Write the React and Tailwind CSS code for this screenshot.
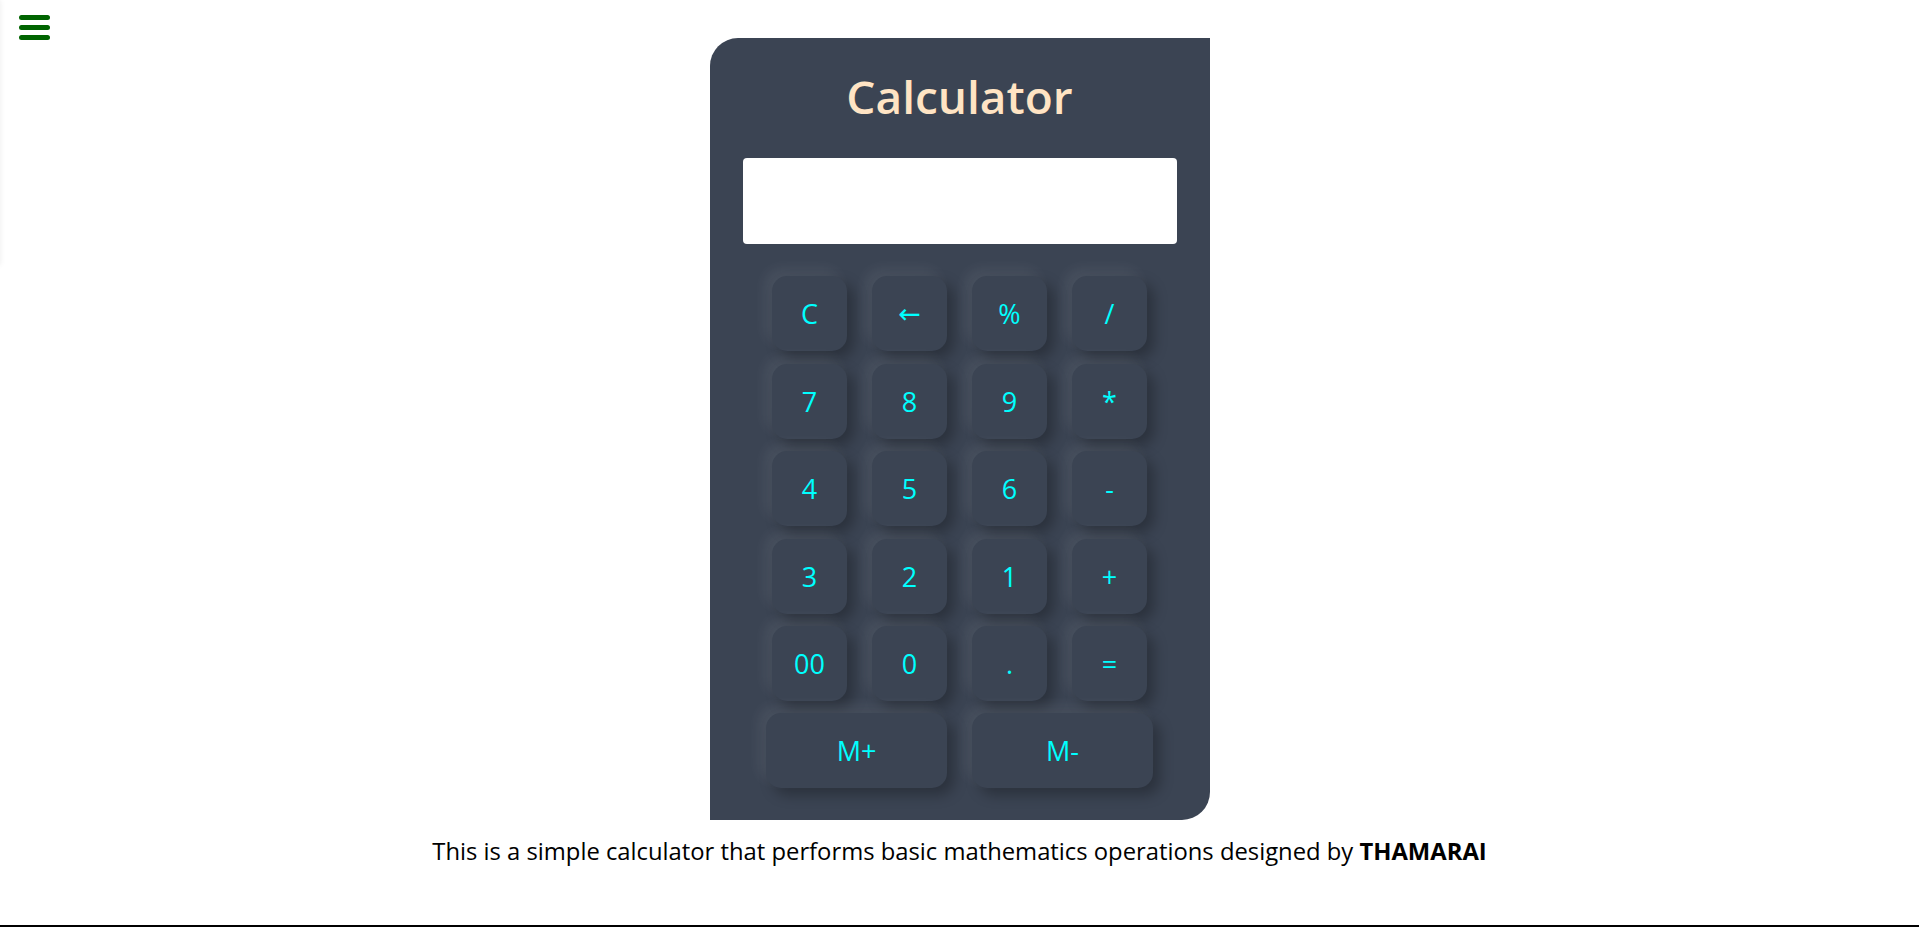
import React, { useState } from "react";

const keys = [
  ["C", "←", "%", "/"],
  ["7", "8", "9", "*"],
  ["4", "5", "6", "-"],
  ["3", "2", "1", "+"],
  ["00", "0", ".", "="],
];

const keyShadow =
  "shadow-[-7px_-7px_14px_rgba(255,255,255,0.07),7px_7px_14px_rgba(0,0,0,0.28)]";

function Key({ label, wide, onPress }) {
  const arrow = label === "←";
  return (
    <button
      onClick={() => onPress(label)}
      className={`${wide ? "w-[181px]" : "w-[75px]"} h-[75px] rounded-[15px] bg-[#3b4453] text-[#00ffff] text-[27px] leading-none ${keyShadow}`}
      style={arrow ? { fontFamily: '"DejaVu Sans", sans-serif' } : undefined}
    >
      {label}
    </button>
  );
}

export default function App() {
  const [display, setDisplay] = useState("");
  const [memory, setMemory] = useState(0);

  const press = (k) => {
    if (k === "C") return setDisplay("");
    if (k === "←") return setDisplay((d) => d.slice(0, -1));
    if (k === "=") {
      try {
        // eslint-disable-next-line no-new-func
        setDisplay(String(Function(`return (${display})`)()));
      } catch (e) {
        setDisplay("Error");
      }
      return;
    }
    if (k === "M+") return setMemory(memory + (parseFloat(display) || 0));
    if (k === "M-") return setMemory(memory - (parseFloat(display) || 0));
    setDisplay((d) => d + k);
  };

  return (
    <div
      className="relative min-h-[928px] bg-white"
      style={{ fontFamily: '"Open Sans", "Noto Sans", sans-serif' }}
    >
      {/* hidden side menu edge */}
      <div className="absolute left-[-250px] top-0 w-[250px] h-[265px] bg-white shadow-[0_0_6px_rgba(0,0,0,0.08)]" />

      <button className="absolute left-[10px] top-[8px] w-[48px] h-[38px] flex flex-col items-center justify-center gap-[5px]">
        <span className="block w-[31px] h-[5px] rounded-full bg-[#006400]" />
        <span className="block w-[31px] h-[5px] rounded-full bg-[#006400]" />
        <span className="block w-[31px] h-[5px] rounded-full bg-[#006400]" />
      </button>

      <div className="flex flex-col items-center pt-[38px]">
        <div className="w-[500px] h-[782px] bg-[#3b4453] rounded-tl-[28px] rounded-br-[28px] flex flex-col items-center">
          <h1 className="mt-[28px] text-[46px] leading-[60px] font-semibold text-[#ffe4c4]">
            Calculator
          </h1>
          <div className="mt-[32px] w-[434px] h-[86px] bg-white rounded-[4px] flex items-center justify-end px-4 text-[32px] text-[#3b4453] overflow-hidden">
            {display}
          </div>
          <div className="mt-[32px] grid grid-cols-[repeat(4,75px)] gap-x-[25px] gap-y-[12.5px]">
            {keys.flat().map((k) => (
              <Key key={k} label={k} onPress={press} />
            ))}
          </div>
          <div className="mt-[12px] flex gap-[25px]">
            <Key label="M+" wide onPress={press} />
            <Key label="M-" wide onPress={press} />
          </div>
        </div>

        <p className="mt-[14px] text-[23.8px] leading-[34px] text-black">
          This is a simple calculator that performs basic mathematics
          operations designed by <b className="font-bold">THAMARAI</b>
        </p>
      </div>

      <div className="absolute left-0 right-0 top-[925px] h-[2px] bg-black" />
    </div>
  );
}
